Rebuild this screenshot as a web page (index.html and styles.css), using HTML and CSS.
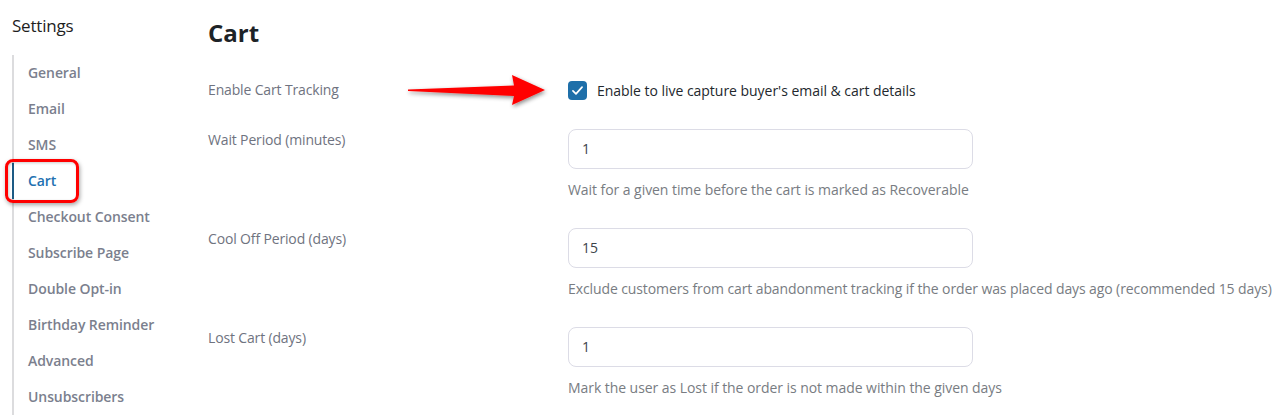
FILE: index.html
```html
<!DOCTYPE html>
<html>
<head>
<meta charset="utf-8">
<link rel="stylesheet" href="styles.css">
</head>
<body>
<div class="page">
  <aside class="sidebar">
    <div class="side-title">Settings</div>
    <nav class="nav">
      <a class="nav-item">General</a>
      <a class="nav-item">Email</a>
      <a class="nav-item">SMS</a>
      <a class="nav-item active">Cart<span class="highlight"></span></a>
      <a class="nav-item">Checkout Consent</a>
      <a class="nav-item">Subscribe Page</a>
      <a class="nav-item">Double Opt-in</a>
      <a class="nav-item">Birthday Reminder</a>
      <a class="nav-item">Advanced</a>
      <a class="nav-item">Unsubscribers</a>
    </nav>
  </aside>
  <main class="main">
    <h1 class="title">Cart</h1>
    <div class="row check-row">
      <div class="label">Enable Cart Tracking</div>
      <label class="check">
        <span class="box"><svg viewBox="0 0 20 20" width="20" height="20"><path d="M5.2 10.4l3.2 3.1 6.4-7" fill="none" stroke="#fff" stroke-width="1.8" stroke-linecap="round" stroke-linejoin="round"/></svg></span>
        <span class="check-text">Enable to live capture buyer's email &amp; cart details</span>
      </label>
      <svg class="arrow" width="150" height="40" viewBox="0 0 150 40">
        <defs>
          <filter id="sh" x="-20%" y="-50%" width="140%" height="200%">
            <feDropShadow dx="1" dy="2" stdDeviation="2" flood-color="#000" flood-opacity="0.45"/>
          </filter>
        </defs>
        <polygon points="3,19.5 109,15.5 107,5 140,20 107,35 109,26 3,21" fill="#ff0000" filter="url(#sh)"/>
      </svg>
    </div>
    <div class="row">
      <div class="label">Wait Period (minutes)</div>
      <div class="field">
        <div class="input">1</div>
        <div class="help">Wait for a given time before the cart is marked as Recoverable</div>
      </div>
    </div>
    <div class="row">
      <div class="label">Cool Off Period (days)</div>
      <div class="field">
        <div class="input">15</div>
        <div class="help narrow">Exclude customers from cart abandonment tracking if the order was placed days ago (recommended 15 days)</div>
      </div>
    </div>
    <div class="row">
      <div class="label">Lost Cart (days)</div>
      <div class="field">
        <div class="input">1</div>
        <div class="help">Mark the user as Lost if the order is not made within the given days</div>
      </div>
    </div>
  </main>
</div>
</body>
</html>
```
FILE: styles.css
```css
* { box-sizing: border-box; }
html, body { margin: 0; padding: 0; background: #fff; }
body {
  font-family: "Open Sans", "Noto Sans", "Liberation Sans", sans-serif;
  font-size: 14px;
  color: #1e1e1e;
  width: 1282px;
  height: 418px;
  overflow: hidden;
}
.page { display: flex; }
.sidebar { width: 208px; padding: 15px 0 0 12px; flex: none; }
.side-title { font-size: 17px; line-height: 22px; color: #1e1e1e; letter-spacing: -0.2px; }
.nav {
  display: flex;
  flex-direction: column;
  margin-top: 18px;
  border-left: 2px solid #dcdcde;
}
.nav-item {
  position: relative;
  display: block;
  padding-left: 14px;
  height: 36px;
  line-height: 36px;
  font-size: 14px;
  font-weight: 600;
  color: #7b7f8e;
  letter-spacing: -0.08px;
  white-space: nowrap;
}
.nav-item.active { color: #2271b1; }
.nav-item.active::before {
  content: "";
  position: absolute;
  left: -2px;
  top: 0;
  width: 2px;
  height: 36px;
  background: #1c5a84;
}
.highlight {
  position: absolute;
  left: -9px;
  top: -4px;
  width: 74px;
  height: 44px;
  border: 3px solid #ff0000;
  border-radius: 8px;
  box-shadow: 1px 2px 4px rgba(0,0,0,0.35), inset 1px 1px 3px rgba(0,0,0,0.2);
}
.main { flex: 1; padding-top: 17px; }
.title {
  margin: 0 0 31px 0;
  font-size: 24px;
  line-height: 32px;
  font-weight: 700;
  color: #1d2327;
}
.row { display: flex; margin-bottom: 28px; position: relative; }
.row.check-row { margin-bottom: 29px; }
.label {
  width: 360px;
  flex: none;
  padding-top: 1px;
  line-height: 20px;
  font-size: 14px;
  color: #6f7380;
  letter-spacing: -0.15px;
}
.check-row { align-items: center; height: 20px; }
.check-row .label { padding-top: 0; }
.check { display: flex; align-items: center; gap: 10px; }
.box {
  width: 19px;
  height: 19px;
  border-radius: 4px;
  background: #1e6fa9;
  display: flex;
  align-items: center;
  justify-content: center;
}
.box svg { width: 19px; height: 19px; }
.check-text { font-size: 14px; color: #23282d; letter-spacing: -0.03px; }
.arrow { position: absolute; left: 197px; top: -10px; }
.field { display: flex; flex-direction: column; }
.input {
  width: 405px;
  height: 40px;
  border: 1px solid #dcdce6;
  border-radius: 8px;
  padding-left: 13px;
  line-height: 38px;
  font-size: 14px;
  color: #3c434a;
}
.help {
  margin-top: 11px;
  line-height: 20px;
  font-size: 14px;
  color: #787c82;
  letter-spacing: -0.06px;
  white-space: nowrap;
}
.help.narrow { letter-spacing: -0.1px; }
```
